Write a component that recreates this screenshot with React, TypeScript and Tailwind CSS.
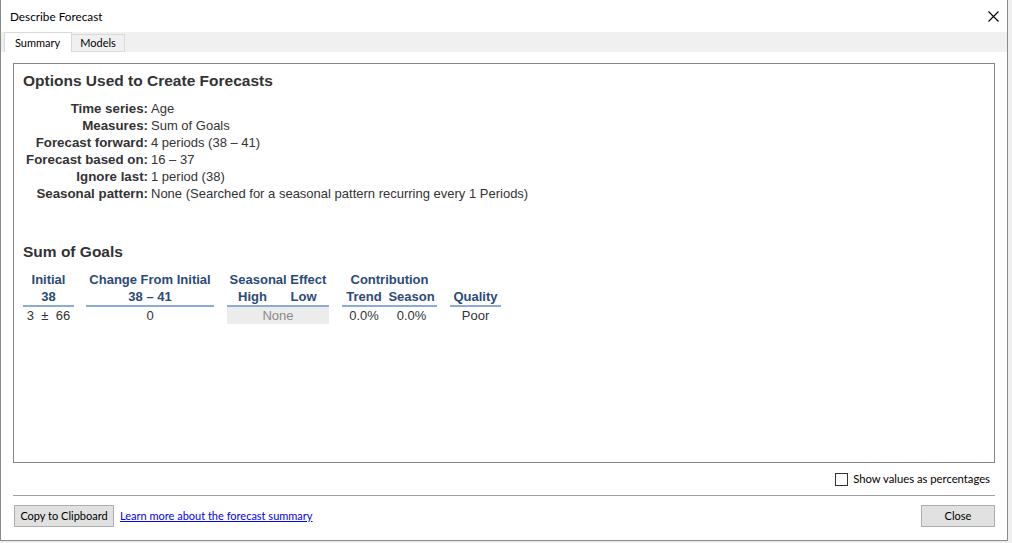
import React from "react";

const ui = { fontFamily: 'Lato, "Noto Sans", sans-serif' };
const arial = { fontFamily: '"Liberation Sans", Arial, sans-serif' };

const opts: [string, string][] = [
  ["Time series:", "Age"],
  ["Measures:", "Sum of Goals"],
  ["Forecast forward:", "4 periods (38 – 41)"],
  ["Forecast based on:", "16 – 37"],
  ["Ignore last:", "1 period (38)"],
  ["Seasonal pattern:", "None (Searched for a seasonal pattern recurring every 1 Periods)"],
];

function Group({
  w,
  r1,
  r2,
  data,
  gray,
}: {
  w: string;
  r1: React.ReactNode;
  r2: React.ReactNode;
  data: React.ReactNode;
  gray?: boolean;
}) {
  return (
    <div className={`${w} flex flex-col`}>
      <div className="h-[17px] leading-[17px] text-center font-bold text-[#2c4a78] whitespace-nowrap">{r1}</div>
      <div className="h-[17px] leading-[17px] text-center font-bold text-[#2c4a78] whitespace-nowrap border-b-2 border-[#8eaad6] box-content">
        {r2}
      </div>
      <div
        className={`h-[17px] leading-[17px] text-center whitespace-nowrap ${
          gray ? "bg-[#ececec] text-[#8a8a8a]" : "text-[#333]"
        }`}
      >
        {data}
      </div>
    </div>
  );
}

export default function App() {
  return (
    <div className="w-[1012px] h-[543px] bg-[#efefef] overflow-hidden">
      <div
        className="w-[1008px] h-[541px] bg-white border border-t-0 border-[#8a8a8a] flex flex-col"
        style={ui}
      >
        {/* title bar */}
        <div className="h-[32px] flex items-center justify-between pl-[9px] pr-[9px] text-[11.75px] text-black">
          <span className="mt-[1px]">Describe Forecast</span>
          <svg width="11" height="11" viewBox="0 0 11 11" className="mr-[-1px]">
            <path d="M0.5 0.5 L10.5 10.5 M10.5 0.5 L0.5 10.5" stroke="#000" strokeWidth="1.1" />
          </svg>
        </div>
        {/* tab strip */}
        <div className="h-[20px] bg-[#f0f0f0] flex items-end pl-[3px] text-[11px]">
          <div className="h-[20px] w-[68px] bg-white border border-b-0 border-[#d9d9d9] flex items-center pl-[10px] pt-[1px]">
            Summary
          </div>
          <div className="h-[18px] w-[53px] border border-l-0 border-[#d9d9d9] flex items-center justify-center pt-[1px]">
            Models
          </div>
        </div>
        {/* body */}
        <div className="flex-1 flex flex-col px-[12px] pt-[11px]">
          <div
            className="h-[400px] border border-[#83868c] pt-[7px] pl-[9px] text-[13px] text-[#333]"
            style={arial}
          >
            <div className="text-[15.5px] font-bold leading-[20px] text-[#333]">Options Used to Create Forecasts</div>
            <div className="mt-[9px] flex flex-col">
              {opts.map(([k, v]) => (
                <div key={k} className="flex h-[17px] leading-[17px]">
                  <div className="w-[125px] text-right font-bold whitespace-nowrap text-[13.3px]">{k}</div>
                  <div className="ml-[3px] whitespace-nowrap">{v}</div>
                </div>
              ))}
            </div>
            <div className="mt-[40px] text-[15.5px] font-bold leading-[20px]">Sum of Goals</div>
            <div className="mt-[9px] flex gap-[12px] pl-[0px]">
              <Group w="w-[51px]" r1="Initial" r2="38" data={<span>3&nbsp;&nbsp;±&nbsp;&nbsp;66</span>} />
              <Group w="w-[128px]" r1="Change From Initial" r2="38 – 41" data="0" />
              <Group
                w="w-[102px] ml-[1px]"
                r1="Seasonal Effect"
                r2={
                  <div className="flex">
                    <span className="w-[51px] text-center">High</span>
                    <span className="w-[51px] text-center">Low</span>
                  </div>
                }
                data="None"
                gray
              />
              <Group
                w="w-[95px] ml-[1px]"
                r1="Contribution"
                r2={
                  <div className="flex">
                    <span className="w-[44px] text-center">Trend</span>
                    <span className="w-[51px] text-center">Season</span>
                  </div>
                }
                data={
                  <div className="flex">
                    <span className="w-[44px] text-center">0.0%</span>
                    <span className="w-[51px] text-center">0.0%</span>
                  </div>
                }
              />
              <Group w="w-[51px] ml-[1px]" r1="" r2="Quality" data="Poor" />
            </div>
          </div>
          {/* checkbox row */}
          <div className="h-[32px] flex items-center justify-end pr-[5px] text-[11.25px] text-black">
            <div className="w-[13px] h-[13px] border border-[#333] bg-white mr-[5px]" />
            <span>Show values as percentages</span>
          </div>
          <div className="h-px bg-[#a0a0a0]" />
          <div className="mt-[9px] flex items-center text-[11px] text-black">
            <div className="ml-[1px] w-[100px] h-[22px] bg-[#e1e1e1] border border-[#adadad] flex items-center justify-center">
              Copy to Clipboard
            </div>
            <a className="ml-[6px] text-[#0000ff] underline" href="#">
              Learn more about the forecast summary
            </a>
            <div className="ml-auto w-[74px] h-[22px] bg-[#e1e1e1] border border-[#adadad] flex items-center justify-center">
              Close
            </div>
          </div>
        </div>
      </div>
    </div>
  );
}
